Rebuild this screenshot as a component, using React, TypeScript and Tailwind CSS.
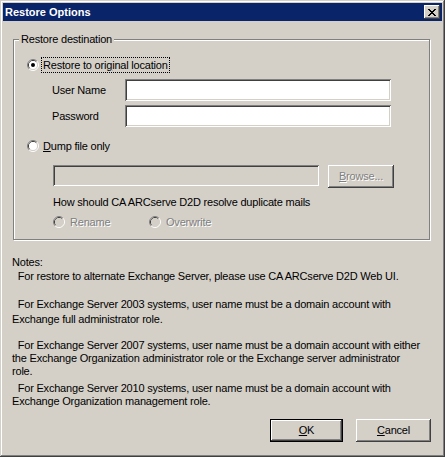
import React from 'react';

// Classic Win2000-style radio, drawn as arcs so the sunken edge matches
const Radio: React.FC<{ checked?: boolean; disabled?: boolean }> = ({ checked, disabled }) => (
  <svg width="12" height="12" viewBox="0 0 12 12" className="shrink-0">
    <path d="M2.11 9.89A5.5 5.5 0 0 1 9.89 2.11" stroke="#808080" fill="none" />
    <path d="M9.89 2.11A5.5 5.5 0 0 1 2.11 9.89" stroke="#ffffff" fill="none" />
    <path d="M2.82 9.18A4.5 4.5 0 0 1 9.18 2.82" stroke="#404040" fill="none" />
    <path d="M9.18 2.82A4.5 4.5 0 0 1 2.82 9.18" stroke="#d4d0c8" fill="none" />
    <circle cx="6" cy="6" r="4" fill={disabled ? '#d4d0c8' : '#ffffff'} />
    {checked && <circle cx="6" cy="6" r="2" fill="#000000" />}
  </svg>
);

// Close glyph, 8x7 pixels
const CloseGlyph: React.FC = () => {
  const rows = ['11000011', '01100110', '00111100', '00011000', '00111100', '01100110', '11000011'];
  return (
    <svg width="8" height="7" viewBox="0 0 8 7" shapeRendering="crispEdges">
      {rows.map((row, y) =>
        row.split('').map((c, x) => (c === '1' ? <rect key={`${x}-${y}`} x={x} y={y} width="1" height="1" fill="#000" /> : null))
      )}
    </svg>
  );
};

const App: React.FC = () => {
  return (
    <div className="w-[445px] h-[457px] bg-[#d4d0c8] p-[3px] font-['Liberation_Sans',Arial,sans-serif] text-[11px] text-black shadow-[inset_-1px_-1px_#404040,inset_1px_1px_#d4d0c8,inset_-2px_-2px_#808080,inset_2px_2px_#ffffff]">
      {/* Title bar */}
      <div className="h-[18px] bg-[#0a246a] flex items-center justify-between pl-[2px] pr-[2px]">
        <span className="text-white font-bold text-[11px] leading-[13px]">Restore Options</span>
        <div className="w-[16px] h-[14px] bg-[#d4d0c8] flex items-center justify-center shadow-[inset_-1px_-1px_#404040,inset_1px_1px_#ffffff,inset_-2px_-2px_#808080]">
          <CloseGlyph />
        </div>
      </div>

      <div className="px-[9px] tracking-[-0.2px]">
        {/* Restore destination group */}
        <fieldset className="mt-[12px] ml-[1px] mr-[3px] border border-[#808080] shadow-[inset_1px_1px_#ffffff,1px_1px_#ffffff]">
          <legend className="ml-[5px] px-[2px] leading-[13px] bg-[#d4d0c8]">Restore destination</legend>
          <div className="pl-[13px] pt-[11px] pb-[9px]">
            <div className="flex items-center h-[16px]">
              <Radio checked />
              <span className="ml-[2px] border border-dotted border-black px-[1px] leading-[14px]">
                Restore to ori<span className="underline">g</span>inal location
              </span>
            </div>

            <div className="mt-[6px] flex items-center">
              <span className="w-[98px] pl-[25px]">User Name</span>
              <div className="w-[266px] h-[22px] bg-white shadow-[inset_1px_1px_#808080,inset_-1px_-1px_#ffffff,inset_2px_2px_#404040,inset_-2px_-2px_#d4d0c8]" />
            </div>
            <div className="mt-[4px] flex items-center">
              <span className="w-[98px] pl-[25px]">Password</span>
              <div className="w-[266px] h-[22px] bg-white shadow-[inset_1px_1px_#808080,inset_-1px_-1px_#ffffff,inset_2px_2px_#404040,inset_-2px_-2px_#d4d0c8]" />
            </div>

            <div className="mt-[11px] flex items-center h-[16px]">
              <Radio />
              <span className="ml-[4px] leading-[14px]">
                <span className="underline">D</span>ump file only
              </span>
            </div>

            <div className="mt-[11px] pl-[26px] flex items-start">
              <div className="w-[266px] h-[21px] bg-[#d4d0c8] shadow-[inset_1px_1px_#808080,inset_-1px_-1px_#ffffff,inset_2px_2px_#404040,inset_-2px_-2px_#d4d0c8]" />
              <div className="ml-[9px] w-[66px] h-[23px] flex items-center justify-center text-[#808080] [text-shadow:1px_1px_0_#ffffff] shadow-[inset_-1px_-1px_#404040,inset_1px_1px_#ffffff,inset_-2px_-2px_#808080,inset_2px_2px_#d4d0c8]">
                <span>
                  <span className="underline">B</span>rowse...
                </span>
              </div>
            </div>

            <div className="mt-[8px] pl-[26px] leading-[13px]">How should CA ARCserve D2D resolve duplicate mails</div>

            <div className="mt-[5px] pl-[26px] flex items-center h-[16px] text-[#808080] [text-shadow:1px_1px_0_#ffffff]">
              <div className="w-[96px] flex items-center">
                <Radio disabled />
                <span className="ml-[5px]">Rename</span>
              </div>
              <div className="flex items-center">
                <Radio disabled />
                <span className="ml-[5px]">Overwrite</span>
              </div>
            </div>
          </div>
        </fieldset>

        {/* Notes */}
        <div className="mt-[16px] leading-[13px] whitespace-pre">
          <div>Notes:</div>
          <div className="mt-[1px]">{'  For restore to alternate Exchange Server, please use CA ARCserve D2D Web UI.'}</div>
          <div className="mt-[15px]">{'  For Exchange Server 2003 systems, user name must be a domain account with'}</div>
          <div className="mt-[2px]">Exchange full administrator role.</div>
          <div className="mt-[13px]">{'  For Exchange Server 2007 systems, user name must be a domain account with either'}</div>
          <div>the Exchange Organization administrator role or the Exchange server administrator</div>
          <div>role.</div>
          <div className="mt-[4px]">{'  For Exchange Server 2010 systems, user name must be a domain account with'}</div>
          <div>Exchange Organization management role.</div>
        </div>

        {/* Buttons */}
        <div className="mt-[11px] pr-[2px] flex justify-end gap-[13px]">
          <div className="w-[73px] h-[23px] border border-black flex items-center justify-center shadow-[inset_-1px_-1px_#404040,inset_1px_1px_#ffffff,inset_-2px_-2px_#808080,inset_2px_2px_#d4d0c8]">
            <span>
              <span className="underline">O</span>K
            </span>
          </div>
          <div className="w-[75px] h-[23px] flex items-center justify-center shadow-[inset_-1px_-1px_#404040,inset_1px_1px_#ffffff,inset_-2px_-2px_#808080,inset_2px_2px_#d4d0c8]">
            <span>
              <span className="underline">C</span>ancel
            </span>
          </div>
        </div>
      </div>
    </div>
  );
};

export default App;
